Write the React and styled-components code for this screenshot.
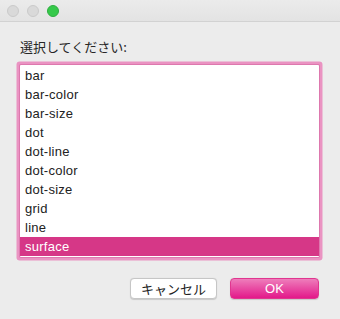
import React, { useState } from 'react'
import styled, { createGlobalStyle } from 'styled-components'

const Global = createGlobalStyle`
  html, body { margin: 0; padding: 0; }
  body {
    background: #ececec;
    font-family: "Liberation Sans", "Noto Sans CJK JP", sans-serif;
    -webkit-font-smoothing: antialiased;
  }
`

const Window = styled.div`
  width: 340px;
  height: 319px;
  display: flex;
  flex-direction: column;
  background: #ececec;
`

const TitleBar = styled.div`
  height: 22px;
  box-sizing: border-box;
  display: flex;
  align-items: center;
  gap: 8px;
  padding-left: 7px;
  background: linear-gradient(#ebebeb, #e3e3e3);
  border-bottom: 1px solid #d2d2d2;
`

const Light = styled.span`
  width: 12px;
  height: 12px;
  border-radius: 50%;
  box-sizing: border-box;
  background: ${p => (p.$on ? '#35c94a' : '#d9d9d9')};
  border: 1px solid ${p => (p.$on ? '#2eae40' : '#cacaca')};
`

const Body = styled.div`
  flex: 1;
  display: flex;
  flex-direction: column;
  padding: 17px 21px 0 20px;
`

const Label = styled.div`
  font-size: 13px;
  line-height: 16px;
  color: #262626;
  font-family: "Noto Sans CJK JP", sans-serif;
  margin-bottom: 10px;
`

const List = styled.div`
  background: #fff;
  width: 299px;
  box-sizing: border-box;
  padding: 1px 0 1px;
  border-radius: 1px;
  box-shadow: 0 0 0 1px #dd78ae, 0 0 0 3.5px #ea93c2;
`

const Row = styled.div`
  height: 19px;
  line-height: 19px;
  padding-left: 5px;
  font-size: 13px;
  letter-spacing: 0.25px;
  color: ${p => (p.$sel ? '#fff' : '#222')};
  background: ${p => (p.$sel ? '#d63787' : 'transparent')};
`

const Buttons = styled.div`
  display: flex;
  justify-content: flex-end;
  gap: 13px;
  margin-top: 21px;
`

const Button = styled.button`
  height: 21px;
  box-sizing: border-box;
  border-radius: 4px;
  font-size: 13px;
  padding: 0;
  font-family: "Liberation Sans", "Noto Sans CJK JP", sans-serif;
  width: ${p => (p.$primary ? '89px' : '87px')};
  color: ${p => (p.$primary ? '#fff' : '#222')};
  border: ${p => (p.$primary ? '1px solid #e0368f' : '1px solid #c6c6c6')};
  background: ${p => (p.$primary ? 'linear-gradient(#ee7dbb, #e3198a)' : '#fff')};
  box-shadow: 0 0.5px 1px rgba(0, 0, 0, 0.15);
`

const items = ['bar', 'bar-color', 'bar-size', 'dot', 'dot-line', 'dot-color', 'dot-size', 'grid', 'line', 'surface']

export default function App() {
  const [sel, setSel] = useState('surface')
  return (
    <Window>
      <Global />
      <TitleBar>
        <Light />
        <Light />
        <Light $on />
      </TitleBar>
      <Body>
        <Label>選択してください:</Label>
        <List>
          {items.map(it => (
            <Row key={it} $sel={it === sel} onClick={() => setSel(it)}>{it}</Row>
          ))}
        </List>
        <Buttons>
          <Button>キャンセル</Button>
          <Button $primary>OK</Button>
        </Buttons>
      </Body>
    </Window>
  )
}
